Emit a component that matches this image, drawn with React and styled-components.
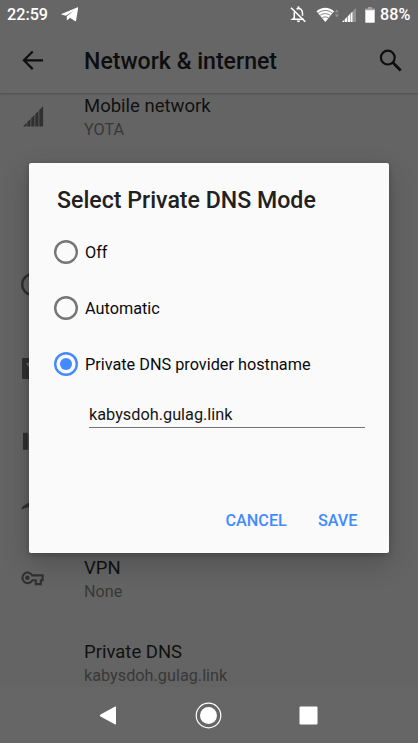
import React from 'react';
import styled, { createGlobalStyle } from 'styled-components';

const GlobalStyle = createGlobalStyle`
  * { box-sizing: border-box; }
  body { margin: 0; background: #666; font-family: Roboto, sans-serif; }
  svg { display: block; flex: none; }
`;

const Screen = styled.div`
  position: relative;
  width: 418px;
  height: 743px;
  overflow: hidden;
  display: flex;
  flex-direction: column;
  background: #646464;
`;

const StatusBar = styled.div`
  height: 29px;
  flex: none;
  display: flex;
  align-items: center;
  padding: 0 11px 0 7px;
  background: #666;
  color: #fff;
`;

const StatusText = styled.span`
  font-size: 16.2px;
  line-height: 29px;
  font-weight: 500;
  width: ${(p) => p.$width}px;
  white-space: nowrap;
`;

const StatusIcons = styled.div`
  display: flex;
  align-items: center;
  margin-left: auto;
`;

const Gap = styled.span`
  width: ${(p) => p.$size}px;
  flex: none;
`;

const AppBar = styled.header`
  height: 64px;
  flex: none;
  display: flex;
  align-items: center;
  padding: 0 13px 0 19px;
  background: #666;
  box-shadow: 0 1px 2px rgba(0, 0, 0, 0.22);
  position: relative;
  z-index: 1;
`;

const PageTitle = styled.h1`
  margin: 0 auto 0 37px;
  padding-top: 2px;
  font-size: 23.1px;
  line-height: 28px;
  font-weight: 500;
  color: #0e0e0e;
`;

const List = styled.main`
  flex: 1;
  min-height: 0;
  overflow: hidden;
  display: flex;
  flex-direction: column;
`;

const Row = styled.div`
  height: ${(p) => p.$height || 84}px;
  margin-top: ${(p) => p.$shift || 0}px;
  flex: none;
  display: flex;
  align-items: center;
  padding-left: 19px;
`;

const IconSlot = styled.div`
  width: 65px;
  flex: none;
`;

const RowTitle = styled.div`
  font-size: 18.5px;
  line-height: 24px;
  color: #111;
`;

const RowSummary = styled.div`
  font-size: 16.25px;
  line-height: 22px;
  margin-top: 1px;
  color: #383838;
`;

const NavBar = styled.nav`
  height: 56px;
  flex: none;
  display: flex;
  align-items: center;
  justify-content: center;
  gap: 73px;
  padding-right: 1px;
  background: #666;
`;

const Dialog = styled.section`
  position: absolute;
  left: 29px;
  top: 162.5px;
  width: 360px;
  height: 390px;
  z-index: 2;
  display: flex;
  flex-direction: column;
  background: #fafafa;
  border-radius: 2px;
  box-shadow: 0 10px 28px rgba(0, 0, 0, 0.2), 0 2px 6px rgba(0, 0, 0, 0.2);
`;

const DialogTitle = styled.h2`
  margin: 24px 0 9.5px 28px;
  font-size: 23.15px;
  line-height: 28px;
  font-weight: 500;
  color: #212121;
`;

const Option = styled.div`
  height: 56px;
  display: flex;
  align-items: center;
  gap: 7px;
  padding-left: 25px;
  font-size: 16.25px;
  color: #0a0a0a;
`;

const Radio = styled.span`
  width: 24px;
  height: 24px;
  flex: none;
  display: flex;
  align-items: center;
  justify-content: center;
  border-radius: 50%;
  box-shadow: inset 0 0 0 2.4px ${(p) => (p.$checked ? '#448aff' : '#757575')};

  &::after {
    content: '';
    width: 12px;
    height: 12px;
    border-radius: 50%;
    background: ${(p) => (p.$checked ? '#448aff' : 'transparent')};
  }
`;

const Field = styled.div`
  margin: 9px 24px 0 60px;
  height: 27px;
  border-bottom: 1px solid #747474;
  font-size: 16.3px;
  line-height: 28px;
  color: #151515;
`;

const Actions = styled.div`
  display: flex;
  justify-content: flex-end;
  gap: 31px;
  margin-top: auto;
  padding: 0 31.5px 22px 0;
`;

const Action = styled.button`
  border: 0;
  padding: 0;
  background: none;
  font: 500 16.25px/20px Roboto, sans-serif;
  color: #448aff;
`;

const TelegramIcon = () => (
  <svg width="18" height="15" viewBox="0 0 18 15">
    <path d="M.4 6.9 16.1.4c.8-.3 1.2.1 1 .9l-2 12.1c-.1.8-.7 1-1.3.6L9.1 10.7l-2.5 2.2c-.4.3-.8.1-.8-.4V9.2L13 3.6 4.8 8.7.5 7.5c-.4-.1-.4-.4-.1-.6Z" fill="#fff" />
  </svg>
);

const BellOffIcon = () => (
  <svg width="17" height="17" viewBox="0 0 17 17" fill="none" stroke="#fff">
    <path d="M4.3 6v5.8L2.5 13.2h11.2M6.5 3.2c3.3-1.7 6 .3 6 4.1v2.5" strokeWidth="1.5" />
    <path d="M8.5.4v2" strokeWidth="2" />
    <path d="M6.8 14.5a1.7 1.7 0 0 0 3.4 0Z" fill="#fff" stroke="none" />
    <path d="m1 1.7 14.3 14.1" strokeWidth="1.6" />
  </svg>
);

const WifiIcon = () => (
  <svg width="24" height="16" viewBox="0 0 24 16">
    <path d="M.5 4.2C5.4-.5 13.2-.5 18.1 4.2L9.3 15Z" fill="#fff" />
    <path d="M2.3 5.9c4.2-3.2 9.8-3.2 14 0M4.2 8.4c3-2.3 7.2-2.3 10.2 0M6.2 10.9c1.8-1.3 4.4-1.3 6.2 0" fill="none" stroke="#666" strokeWidth=".8" />
    <path d="m20.8 2.2 2 3.3h-4ZM20.8 10.6l2-3.3h-4Z" fill="#929292" />
  </svg>
);

const StatusSignalIcon = () => (
  <svg width="14" height="14" viewBox="0 0 14 14">
    <path d="M0 14 2 12v2ZM2.6 11.4 5 9v5H2.6ZM5.6 8.4 8 6v8H5.6ZM8.5 5.5 10.6 3.4V14H8.5Z" fill="#fff" />
    <path d="m11 3 3-3v14h-3Z" fill="#929292" />
  </svg>
);

const BatteryIcon = () => (
  <svg width="10" height="16" viewBox="0 0 10 16">
    <path d="M3 0h4v1.5h2.2c.5 0 .8.3.8.8V4H0V2.3c0-.5.3-.8.8-.8H3Z" fill="#a2a2a2" />
    <path d="M.3 3.2h9.4v11.7q0 .8-.8.8H1.1q-.8 0-.8-.8Z" fill="#fff" />
  </svg>
);

const BackIcon = () => (
  <svg width="28" height="28" viewBox="0 0 28 28" fill="none" stroke="#0e0e0e" strokeWidth="2.2">
    <path d="M24 13.3H5.5M13.7 4.4 4.9 13.3l8.8 8.8" />
  </svg>
);

const SearchIcon = () => (
  <svg width="28" height="28" viewBox="0 0 28 28" fill="none" stroke="#0e0e0e">
    <circle cx="10.8" cy="10.6" r="6.9" strokeWidth="2.2" />
    <path d="m15.8 15.6 7.9 7.9" strokeWidth="2.8" />
  </svg>
);

const RowIcon = ({ children }) => (
  <svg width="28" height="28" viewBox="0 0 28 28" fill="#303030">{children}</svg>
);

const rows = [
  { title: 'Mobile network', summary: 'YOTA', shift: -18, icon: <path d="m4 23.4 3.6-3.6v3.6ZM8.3 19.1l3.2-3.2v7.5H8.3ZM12.3 15.1l3.2-3.2v11.5h-3.2ZM16.3 11.1l3.2-3.2v15.5h-3.2ZM20.3 7.1l3.8-3.8v20.1h-3.8Z" /> },
  {},
  { icon: <circle cx="13.5" cy="13.5" r="10.3" fill="none" stroke="#303030" strokeWidth="2.4" /> },
  { icon: <><rect x="3" y="3" width="21" height="21" rx="1" /><path d="m7 8.5 3-1v5Z" fill="#666" /></> },
  { height: 63, icon: <><path d="M4 3.8h4.8v17H4Z" /><path d="M9.7 5.5h14v15h-14Z" /></> },
  { height: 63, icon: <path d="M2.5 17.2v-1.3L4.5 13.8 11 10V4.5q2.2-3 4.4 0V10l9 5.3v2.4L15.4 15v6h-4.4v-6.3Z" /> },
  { title: 'VPN', summary: 'None', icon: <g fill="none" stroke="#303030" strokeWidth="2.1"><path d="M13.4 10.4h10.2v4.9h-1.8v3.8h-5v-3.8h-3.4a5.3 5.3 0 1 1 0-4.9Z" /><circle cx="8.4" cy="12.8" r="1.2" /></g> },
  { title: 'Private DNS', summary: 'kabysdoh.gulag.link' },
];

const options = [
  { label: 'Off' },
  { label: 'Automatic' },
  { label: 'Private DNS provider hostname', checked: true },
];

export default function App() {
  return (
    <Screen>
      <GlobalStyle />
      <StatusBar>
        <StatusText $width={54}>22:59</StatusText>
        <TelegramIcon />
        <StatusIcons>
          <BellOffIcon />
          <Gap $size={9} />
          <WifiIcon />
          <Gap $size={2} />
          <StatusSignalIcon />
          <Gap $size={9} />
          <BatteryIcon />
          <Gap $size={5} />
          <StatusText $width={27}>88%</StatusText>
        </StatusIcons>
      </StatusBar>
      <AppBar>
        <BackIcon />
        <PageTitle>Network &amp; internet</PageTitle>
        <SearchIcon />
      </AppBar>
      <List>
        {rows.map((row, i) => (
          <Row key={i} $height={row.height} $shift={row.shift}>
            <IconSlot>{row.icon && <RowIcon>{row.icon}</RowIcon>}</IconSlot>
            {row.title && (
              <div>
                <RowTitle>{row.title}</RowTitle>
                <RowSummary>{row.summary}</RowSummary>
              </div>
            )}
          </Row>
        ))}
      </List>
      <NavBar>
        <svg width="27" height="27" viewBox="0 0 27 27">
          <path d="M5.5 12.6 19.7 4.7q1.3-.7 1.3.7v16.2q0 1.4-1.3.7L5.5 14.4q-1.4-.9 0-1.8Z" fill="#fff" />
        </svg>
        <svg width="27" height="27" viewBox="0 0 27 27">
          <circle cx="13.5" cy="13.5" r="12.3" fill="none" stroke="#fff" strokeWidth="1.2" />
          <circle cx="13.5" cy="13.5" r="8.5" fill="#fff" />
        </svg>
        <svg width="27" height="27" viewBox="0 0 27 27">
          <rect x="4.5" y="4.5" width="18" height="18" rx="1" fill="#fff" />
        </svg>
      </NavBar>
      <Dialog role="dialog">
        <DialogTitle>Select Private DNS Mode</DialogTitle>
        {options.map((option) => (
          <Option key={option.label}>
            <Radio $checked={option.checked} />
            {option.label}
          </Option>
        ))}
        <Field>kabysdoh.gulag.link</Field>
        <Actions>
          <Action>CANCEL</Action>
          <Action>SAVE</Action>
        </Actions>
      </Dialog>
    </Screen>
  );
}
